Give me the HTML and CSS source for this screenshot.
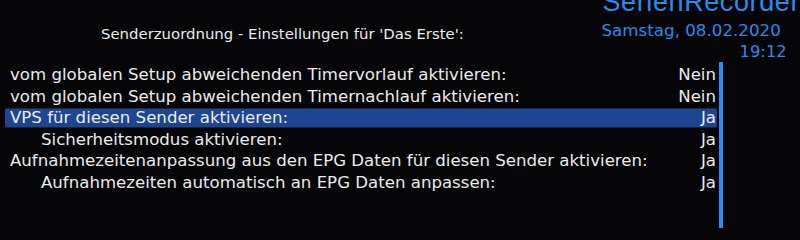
FILE: index.html
```html
<!DOCTYPE html>
<html lang="de">
<head>
<meta charset="utf-8">
<title>SerienRecorder</title>
<link rel="stylesheet" href="styles.css">
</head>
<body>
<div class="screen">
  <header class="header">
    <div class="title">Senderzuordnung - Einstellungen für 'Das Erste':</div>
    <div class="info">
      <div class="logo">SerienRecorder</div>
      <div class="date">Samstag, 08.02.2020</div>
      <div class="time">19:12</div>
    </div>
  </header>
  <main class="content">
    <ul class="list">
      <li class="row"><span class="label">vom globalen Setup abweichenden Timervorlauf aktivieren:</span><span class="value">Nein</span></li>
      <li class="row"><span class="label">vom globalen Setup abweichenden Timernachlauf aktivieren:</span><span class="value">Nein</span></li>
      <li class="row selected"><span class="label">VPS für diesen Sender aktivieren:</span><span class="value">Ja</span></li>
      <li class="row sub"><span class="label">Sicherheitsmodus aktivieren:</span><span class="value">Ja</span></li>
      <li class="row"><span class="label">Aufnahmezeitenanpassung aus den EPG Daten für diesen Sender aktivieren:</span><span class="value">Ja</span></li>
      <li class="row sub"><span class="label">Aufnahmezeiten automatisch an EPG Daten anpassen:</span><span class="value">Ja</span></li>
    </ul>
    <div class="scrollbar"></div>
  </main>
</div>
</body>
</html>
```
FILE: styles.css
```css
html, body {
  margin: 0;
  padding: 0;
  background: #050508;
}
.screen {
  width: 800px;
  height: 228px;
  overflow: hidden;
  font-family: "DejaVu Sans", Verdana, sans-serif;
  color: #ebebeb;
}
.header {
  display: flex;
  height: 62px;
}
.title {
  width: 603px;
  box-sizing: border-box;
  padding-left: 101px;
  padding-top: 25px;
  font-size: 14.9px;
  line-height: 18px;
}
.info {
  flex: 1;
  color: #2a8ceb;
  display: flex;
  flex-direction: column;
}
.logo {
  font-family: "Liberation Sans", Arial, sans-serif;
  font-size: 27px;
  line-height: 27px;
  margin-top: -11px;
  margin-left: 1px;
  white-space: nowrap;
  letter-spacing: 0.6px;
}
.date {
  font-size: 16.7px;
  line-height: 19px;
  margin-top: 5px;
  white-space: nowrap;
}
.time {
  font-size: 16.4px;
  line-height: 19px;
  margin-top: 2px;
  padding-left: 138px;
}
.content {
  display: flex;
  gap: 2px;
}
.list {
  list-style: none;
  margin: 2px 0 0 5px;
  padding: 0;
  width: 712px;
}
.row {
  display: flex;
  justify-content: space-between;
  height: 21.5px;
  line-height: 21.5px;
  font-size: 16.6px;
  padding: 0 1px 0 5px;
  white-space: nowrap;
}
.row.sub .label {
  padding-left: 31px;
}
.row.selected {
  background: linear-gradient(#2c56a2 0, #1f4792 2px, #1d438c 100%);
  border-radius: 2px;
  box-shadow: inset 0 1.5px 0 #050508, inset 0 -1.5px 0 #050508;
}
.scrollbar {
  width: 4px;
  height: 180px;
  background: #2a8df0;
}
```
